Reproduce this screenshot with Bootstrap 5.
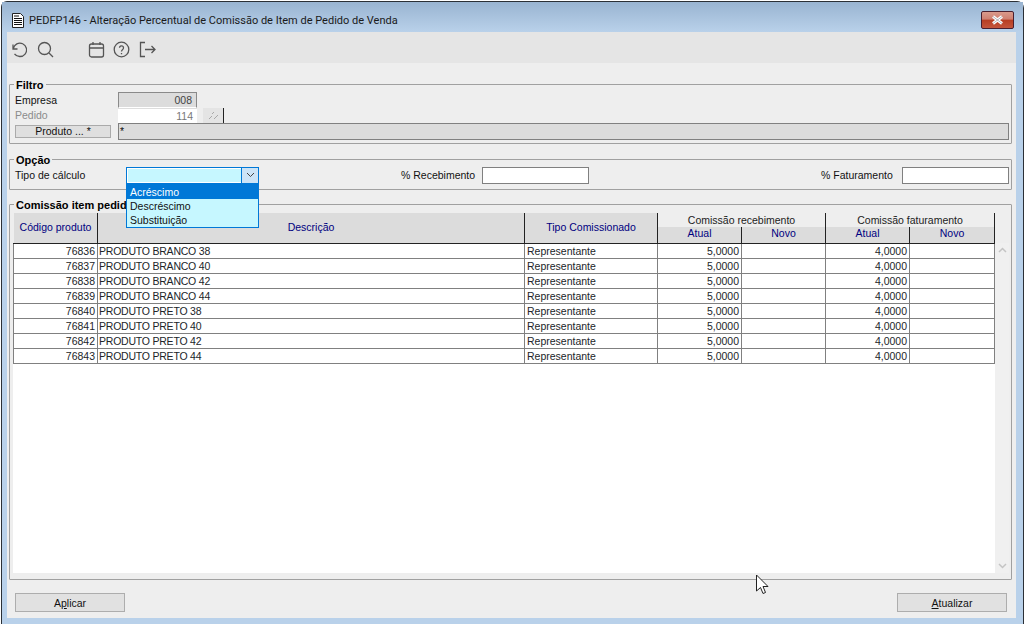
<!DOCTYPE html>
<html lang="pt-BR">
<head>
<meta charset="utf-8">
<title>PEDFP146</title>
<link href="https://cdn.jsdelivr.net/npm/bootstrap@5.3.0/dist/css/bootstrap.min.css" rel="stylesheet">
<style>
html,body{margin:0;height:624px;overflow:hidden;background:#fff}
body{font-family:"Liberation Sans",Arial,sans-serif;font-size:10.5px;line-height:13px;color:#111}
.janela{width:1023px;height:623px;margin:1px 0 0 1px;border:1px solid #2b3036;border-bottom:0;border-radius:6px 7px 0 0;background:#b9d1ea;position:relative}
.titulo{height:30px;background:linear-gradient(#99b4d1,#b9d1ea);padding:6px 0 0 9px;gap:4px;font-family:Roboto,sans-serif;font-size:11px;color:#1a1a1a}
.fechar{width:33px;height:18px;margin-right:9px;border:1px solid #4a1f2e;border-radius:2px;background:linear-gradient(#d99a8c 0,#cf7f70 45%,#b73d22 50%,#c4553c 100%);padding:0}
.ferramentas{height:31px;margin:0 7px 0 5px;background:#e5e5e5;padding:3px 0 0 3px}
.ferramentas svg{display:block}
.icone{width:17px;height:17px;fill:none;stroke:#555;stroke-width:1.3}
.sep-busca{margin-left:10px}
.sep-largo{margin-left:34px}
.sep-saida{margin-left:9px}
.miolo{height:555px;margin:0 7px 0 5px;background:#eee;padding:14px 4px 0 2px}
.grupo{border:1px solid #a0a0a0;padding:0;margin:0;min-width:0;border-radius:1px}
.grupo legend{float:none;width:auto;margin:0 0 0 -1px;padding:2px 2px 0;font-size:11px;line-height:13px;font-weight:700;color:#000}
.grupo-filtro{height:67px;padding:0 2px 0 5px}
.grupo-opcao{height:38px;margin-top:8px;padding:0 1px 0 5px;position:relative}
.grupo-comissao{height:383px;margin-top:7px;padding:1px 1px 0 3px}
.grupo-comissao legend{margin-left:1px}
.rotulo{width:103px}
.cinza{color:#8b8b8b}
.linha-16{height:16px}
.linha-15{height:15px}
.linha-17{height:17px}
.campo{width:79px;height:16px;background:#dcdcdc;border:1px solid #8a8a8a;border-bottom-color:#fff;text-align:right;padding:1px 4px 0 0;color:#444}
.campo-branco{height:15px;background:#fff;border:0;color:#777;border-top:1px solid #ddd}
.lupa{width:21px;height:15px;margin-left:6px;background:#e4e4e4;border:0;border-right:1px solid #222;padding:0;display:flex;align-items:center;justify-content:center}
.botao-produto{width:96px;height:13px;margin-right:7px;background:#dfdfdf;border:1px solid #aaa;padding:0;font-size:10.5px;line-height:11px;color:#111}
.campo-largo{height:17px;background:#dcdcdc;border:1px solid #808080;padding:1px 1px;color:#111}
.rotulo-tipo{width:111px}
.combo{width:133px;height:17px;border:1px solid #0078d7;background:#c6f7ff;box-shadow:inset 0 0 0 1px #fff;position:relative}
.combo i{position:absolute;right:0;top:0;width:17px;height:15px;background:#cce4f7;border-left:1px solid #0078d7;display:block}
.combo svg{display:block;margin:4px auto 0}
.lista{position:absolute;left:116px;top:17px;width:133px;height:44px;background:#c6f7ff;border:1px solid #0078d7;z-index:5}
.lista div{height:14px;line-height:14px;padding-left:3px;color:#111}
.lista .ativo{background:#0078d7;color:#fff}
.rotulo-perc{width:81px}
.perc-1{margin-left:142px}
.perc-2{margin-left:232px}
.entrada{height:17px;width:107px;background:#fff;border:1px solid #808080}
.grade-area{height:360px}
.painel{width:982px;height:360px;background:#fff}
.rolagem{width:14px;height:330px;margin-top:30px;background:#f0f0f0;padding:4px 0}
.grade{width:981px;table-layout:fixed;border-collapse:collapse;margin:0;--bs-table-bg:transparent;border-color:#808080}
.grade th,.grade td{padding:1px 2px 0;height:15px;line-height:13px;font-size:10.5px;font-weight:400;border:1px solid #808080;white-space:nowrap;overflow:hidden;box-shadow:none}
.grade thead th{padding:0 2px;background:#dcdcdc;color:#000080;text-align:center;border:0;border-right:1px solid #222;border-left:1px solid #eee;vertical-align:middle}
.grade thead tr:last-child th{border-bottom:1px solid #222;height:16px;vertical-align:top}
.grade thead th.grupo-col{background:#eee;color:#222;height:14px}
.grade thead th.alta{border-bottom:1px solid #222}
.grade tbody td.num{text-align:right}
.grade tbody td.desc{letter-spacing:-.22px;padding-left:1px}
.c1{width:84px}.c2{width:427px}.c3{width:133px}.c4,.c5,.c6{width:84px}.c7{width:85px}
.rodape{height:19px;margin-top:13px;padding:0 5px 0 6px}
.acao{width:110px;height:19px;background:#e1e1e1;border:1px solid #adadad;border-radius:0;padding:2px 0 0;font-size:10.5px;line-height:15px;color:#111}
.cursor{position:absolute;left:753px;top:572px;z-index:9}
</style>
</head>
<body>
<div class="janela">
  <div class="titulo d-flex align-items-center">
    <svg width="14" height="17" viewBox="0 0 14 17"><path d="M1.500 1.500h8l3 3v11h-11z" fill="#fff" stroke="#222"/><path d="M3 4h5M3 6.500h8M3 8.500h8M3 10.500h8M3 12.500h8" stroke="#111"/></svg>
    <span class="flex-grow-1">PEDFP146 - Alteração Percentual de Comissão de Item de Pedido de Venda</span>
    <button class="fechar d-flex align-items-center justify-content-center" aria-label="Fechar"><svg width="13" height="10" viewBox="0 0 13 10"><path d="M2 1.500l9 7M11 1.500l-9 7" stroke="#fff" stroke-width="3"/><path d="M2 1.500l9 7M11 1.500l-9 7" stroke="#6a6a7a" stroke-width=".5" fill="none"/></svg></button>
  </div>
  <div class="ferramentas d-flex align-items-center">
    <svg class="icone" viewBox="0 0 17 17"><path d="M3 3.500v4.500h4.500M3.300 7.600A6.700 6.700 0 1 1 4.500 12.800"/></svg>
    <svg class="icone sep-busca" viewBox="0 0 17 17"><circle cx="7.500" cy="7.500" r="6"/><path d="M12 12l4 4"/></svg>
    <svg class="icone sep-largo" viewBox="0 0 17 17"><rect x="1.500" y="3" width="14" height="13" rx="2"/><path d="M1.500 7h14M5 1v3M12 1v3"/></svg>
    <svg class="icone ms-2" viewBox="0 0 17 17"><circle cx="8.500" cy="8.500" r="7.300"/><path d="M6.500 6.800a2 2 0 1 1 3.200 1.600c-.8.600-1.200 1-1.200 2M8.500 12v1.300"/></svg>
    <svg class="icone sep-saida" viewBox="0 0 17 17"><path d="M6 1.500H1.500v14H6M6 8.500h10M12.500 5l3.500 3.500-3.500 3.500"/></svg>
  </div>
  <div class="miolo">
    <fieldset class="grupo grupo-filtro">
      <legend>Filtro</legend>
      <div class="d-flex align-items-center linha-16"><span class="rotulo">Empresa</span><div class="campo">008</div></div>
      <div class="d-flex align-items-center linha-15"><span class="rotulo cinza">Pedido</span><div class="campo campo-branco">114</div><button class="lupa" aria-label="Buscar"><svg width="11" height="9" viewBox="0 0 11 9"><path d="M1 8l3-3M4 3l2-2M6 8l4-4" stroke="#a8a8a8" fill="none"/></svg></button></div>
      <div class="d-flex align-items-center linha-17"><button class="botao-produto">Produto ... *</button><div class="campo-largo flex-grow-1">*</div></div>
    </fieldset>
    <fieldset class="grupo grupo-opcao">
      <legend>Opção</legend>
      <div class="d-flex align-items-center linha-17">
        <span class="rotulo-tipo">Tipo de cálculo</span>
        <div class="combo"><i><svg width="9" height="6" viewBox="0 0 9 6"><path d="M1 1l3.500 3.500L8 1" fill="none" stroke="#444"/></svg></i></div>
        <span class="rotulo-perc perc-1">% Recebimento</span><div class="entrada"></div>
        <span class="rotulo-perc perc-2">% Faturamento</span><div class="entrada"></div>
      </div>
      <div class="lista"><div class="ativo">Acréscimo</div><div>Descréscimo</div><div>Substituição</div></div>
    </fieldset>
    <fieldset class="grupo grupo-comissao">
      <legend>Comissão item pedido</legend>
      <div class="d-flex grade-area">
        <div class="painel">
          <table class="table grade">
            <colgroup><col class="c1"><col class="c2"><col class="c3"><col class="c4"><col class="c5"><col class="c6"><col class="c7"></colgroup>
            <thead>
              <tr><th rowspan="2" class="alta">Código produto</th><th rowspan="2" class="alta">Descrição</th><th rowspan="2" class="alta">Tipo Comissionado</th><th colspan="2" class="grupo-col">Comissão recebimento</th><th colspan="2" class="grupo-col">Comissão faturamento</th></tr>
              <tr><th>Atual</th><th>Novo</th><th>Atual</th><th>Novo</th></tr>
            </thead>
            <tbody>
              <tr><td class="num">76836</td><td class="desc">PRODUTO BRANCO 38</td><td>Representante</td><td class="num">5,0000</td><td></td><td class="num">4,0000</td><td></td></tr>
              <tr><td class="num">76837</td><td class="desc">PRODUTO BRANCO 40</td><td>Representante</td><td class="num">5,0000</td><td></td><td class="num">4,0000</td><td></td></tr>
              <tr><td class="num">76838</td><td class="desc">PRODUTO BRANCO 42</td><td>Representante</td><td class="num">5,0000</td><td></td><td class="num">4,0000</td><td></td></tr>
              <tr><td class="num">76839</td><td class="desc">PRODUTO BRANCO 44</td><td>Representante</td><td class="num">5,0000</td><td></td><td class="num">4,0000</td><td></td></tr>
              <tr><td class="num">76840</td><td class="desc">PRODUTO PRETO 38</td><td>Representante</td><td class="num">5,0000</td><td></td><td class="num">4,0000</td><td></td></tr>
              <tr><td class="num">76841</td><td class="desc">PRODUTO PRETO 40</td><td>Representante</td><td class="num">5,0000</td><td></td><td class="num">4,0000</td><td></td></tr>
              <tr><td class="num">76842</td><td class="desc">PRODUTO PRETO 42</td><td>Representante</td><td class="num">5,0000</td><td></td><td class="num">4,0000</td><td></td></tr>
              <tr><td class="num">76843</td><td class="desc">PRODUTO PRETO 44</td><td>Representante</td><td class="num">5,0000</td><td></td><td class="num">4,0000</td><td></td></tr>
            </tbody>
          </table>
        </div>
        <div class="rolagem d-flex flex-column justify-content-between align-items-center">
          <svg width="9" height="6" viewBox="0 0 9 6"><path d="M1 5l3.500-3.500L8 5" fill="none" stroke="#c4c4c4" stroke-width="1.500"/></svg>
          <svg width="9" height="6" viewBox="0 0 9 6"><path d="M1 1l3.500 3.500L8 1" fill="none" stroke="#c4c4c4" stroke-width="1.500"/></svg>
        </div>
      </div>
    </fieldset>
    <div class="rodape d-flex justify-content-between">
      <button class="acao"><span>A<u>p</u>licar</span></button>
      <button class="acao"><span><u>A</u>tualizar</span></button>
    </div>
  </div>
  <svg class="cursor" width="14" height="22" viewBox="0 0 14 22"><path d="M1.500 1v16l4-3.500 2.500 6 2.500-1-2.500-6h5z" fill="#fff" stroke="#222"/></svg>
</div>
<script src="https://cdn.jsdelivr.net/npm/bootstrap@5.3.0/dist/js/bootstrap.bundle.min.js"></script>
</body>
</html>
